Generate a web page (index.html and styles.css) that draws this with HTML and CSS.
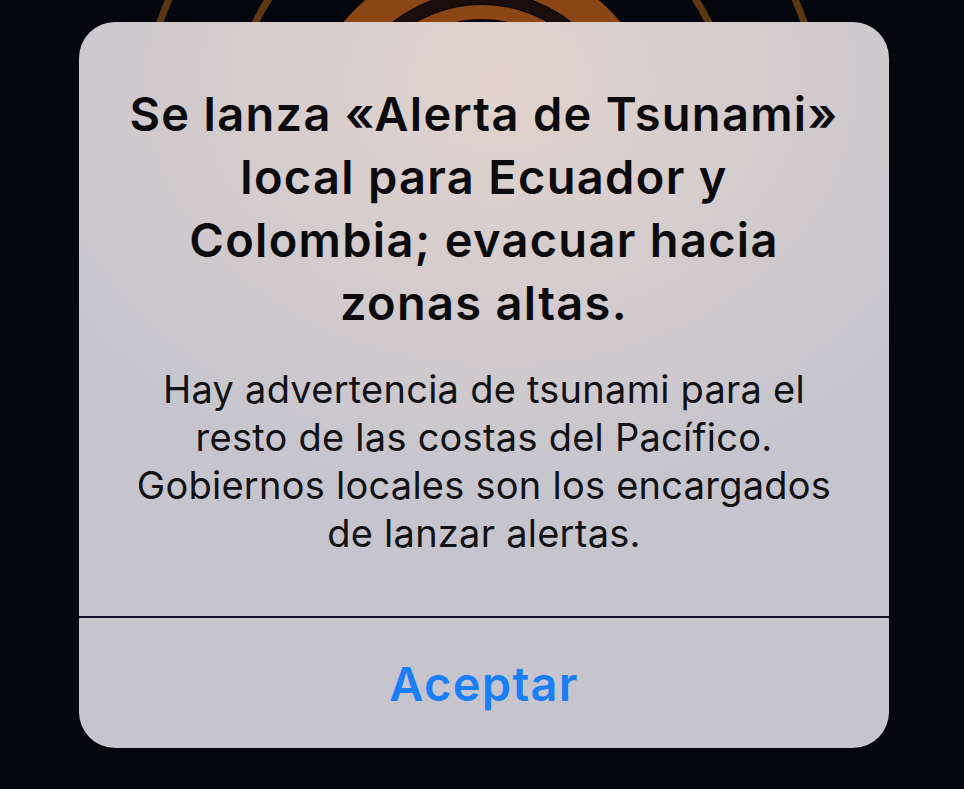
FILE: index.html
```html
<!DOCTYPE html>
<html lang="es">
<head>
<meta charset="utf-8">
<title>Alerta</title>
<link rel="stylesheet" href="styles.css">
</head>
<body>
<svg class="rings" width="964" height="789" viewBox="0 0 964 789" aria-hidden="true">
  <circle cx="482" cy="137" r="342" fill="none" stroke="#5a3712" stroke-width="7"/>
  <circle cx="482" cy="137" r="254" fill="none" stroke="#5e3812" stroke-width="7"/>
  <circle cx="482" cy="137" r="163" fill="none" stroke="#8c4515" stroke-width="34"/>
  <circle cx="482" cy="137" r="139" fill="none" stroke="#1a0d0c" stroke-width="12"/>
  <circle cx="482" cy="137" r="125" fill="none" stroke="#8c4515" stroke-width="14"/>
</svg>
<div class="screen">
  <div class="alert">
    <div class="content">
      <h1 class="title">Se lanza «Alerta de Tsunami»<br>local para Ecuador y<br>Colombia; evacuar hacia<br>zonas altas.</h1>
      <p class="message">Hay advertencia de tsunami para el<br>resto de las costas del Pacífico.<br>Gobiernos locales son los encargados<br>de lanzar alertas.</p>
    </div>
    <div class="divider"></div>
    <button class="action">Aceptar</button>
  </div>
</div>
</body>
</html>
```

FILE: styles.css
```css
* { box-sizing: border-box; }
html, body {
  margin: 0;
  padding: 0;
  width: 964px;
  height: 789px;
  overflow: hidden;
  background: #05050d;
  font-family: Inter, "Noto Sans", "Liberation Sans", sans-serif;
}
body { position: relative; }
.rings {
  position: absolute;
  left: 0;
  top: 0;
}
.screen {
  position: relative;
  padding: 22px 75px 0 79px;
}
.alert {
  width: 810px;
  height: 726px;
  border-radius: 36px;
  overflow: hidden;
  display: flex;
  flex-direction: column;
  background:
    radial-gradient(ellipse 520px 420px at 52% 8%, rgba(226, 211, 204, 1) 0%, rgba(220, 208, 205, 0.85) 35%, rgba(200, 199, 206, 0) 100%),
    #c6c5cd;
}
.content {
  flex: 1;
  padding: 60px 0 0;
  text-align: center;
  white-space: nowrap;
}
.title {
  margin: 0;
  font-size: 47px;
  line-height: 63px;
  font-weight: 600;
  color: #0b0b0e;
  letter-spacing: 1.3px;
}
.message {
  margin: 31px 0 0;
  font-size: 38px;
  line-height: 48px;
  font-weight: 400;
  color: #121215;
  letter-spacing: 0.25px;
}
.divider {
  height: 2px;
  background: #15132c;
}
.action {
  height: 130px;
  border: 0;
  background: transparent;
  font-family: inherit;
  font-size: 47px;
  font-weight: 600;
  color: #1a7ef7;
  letter-spacing: 1.3px;
  padding: 0;
  cursor: pointer;
}
```
